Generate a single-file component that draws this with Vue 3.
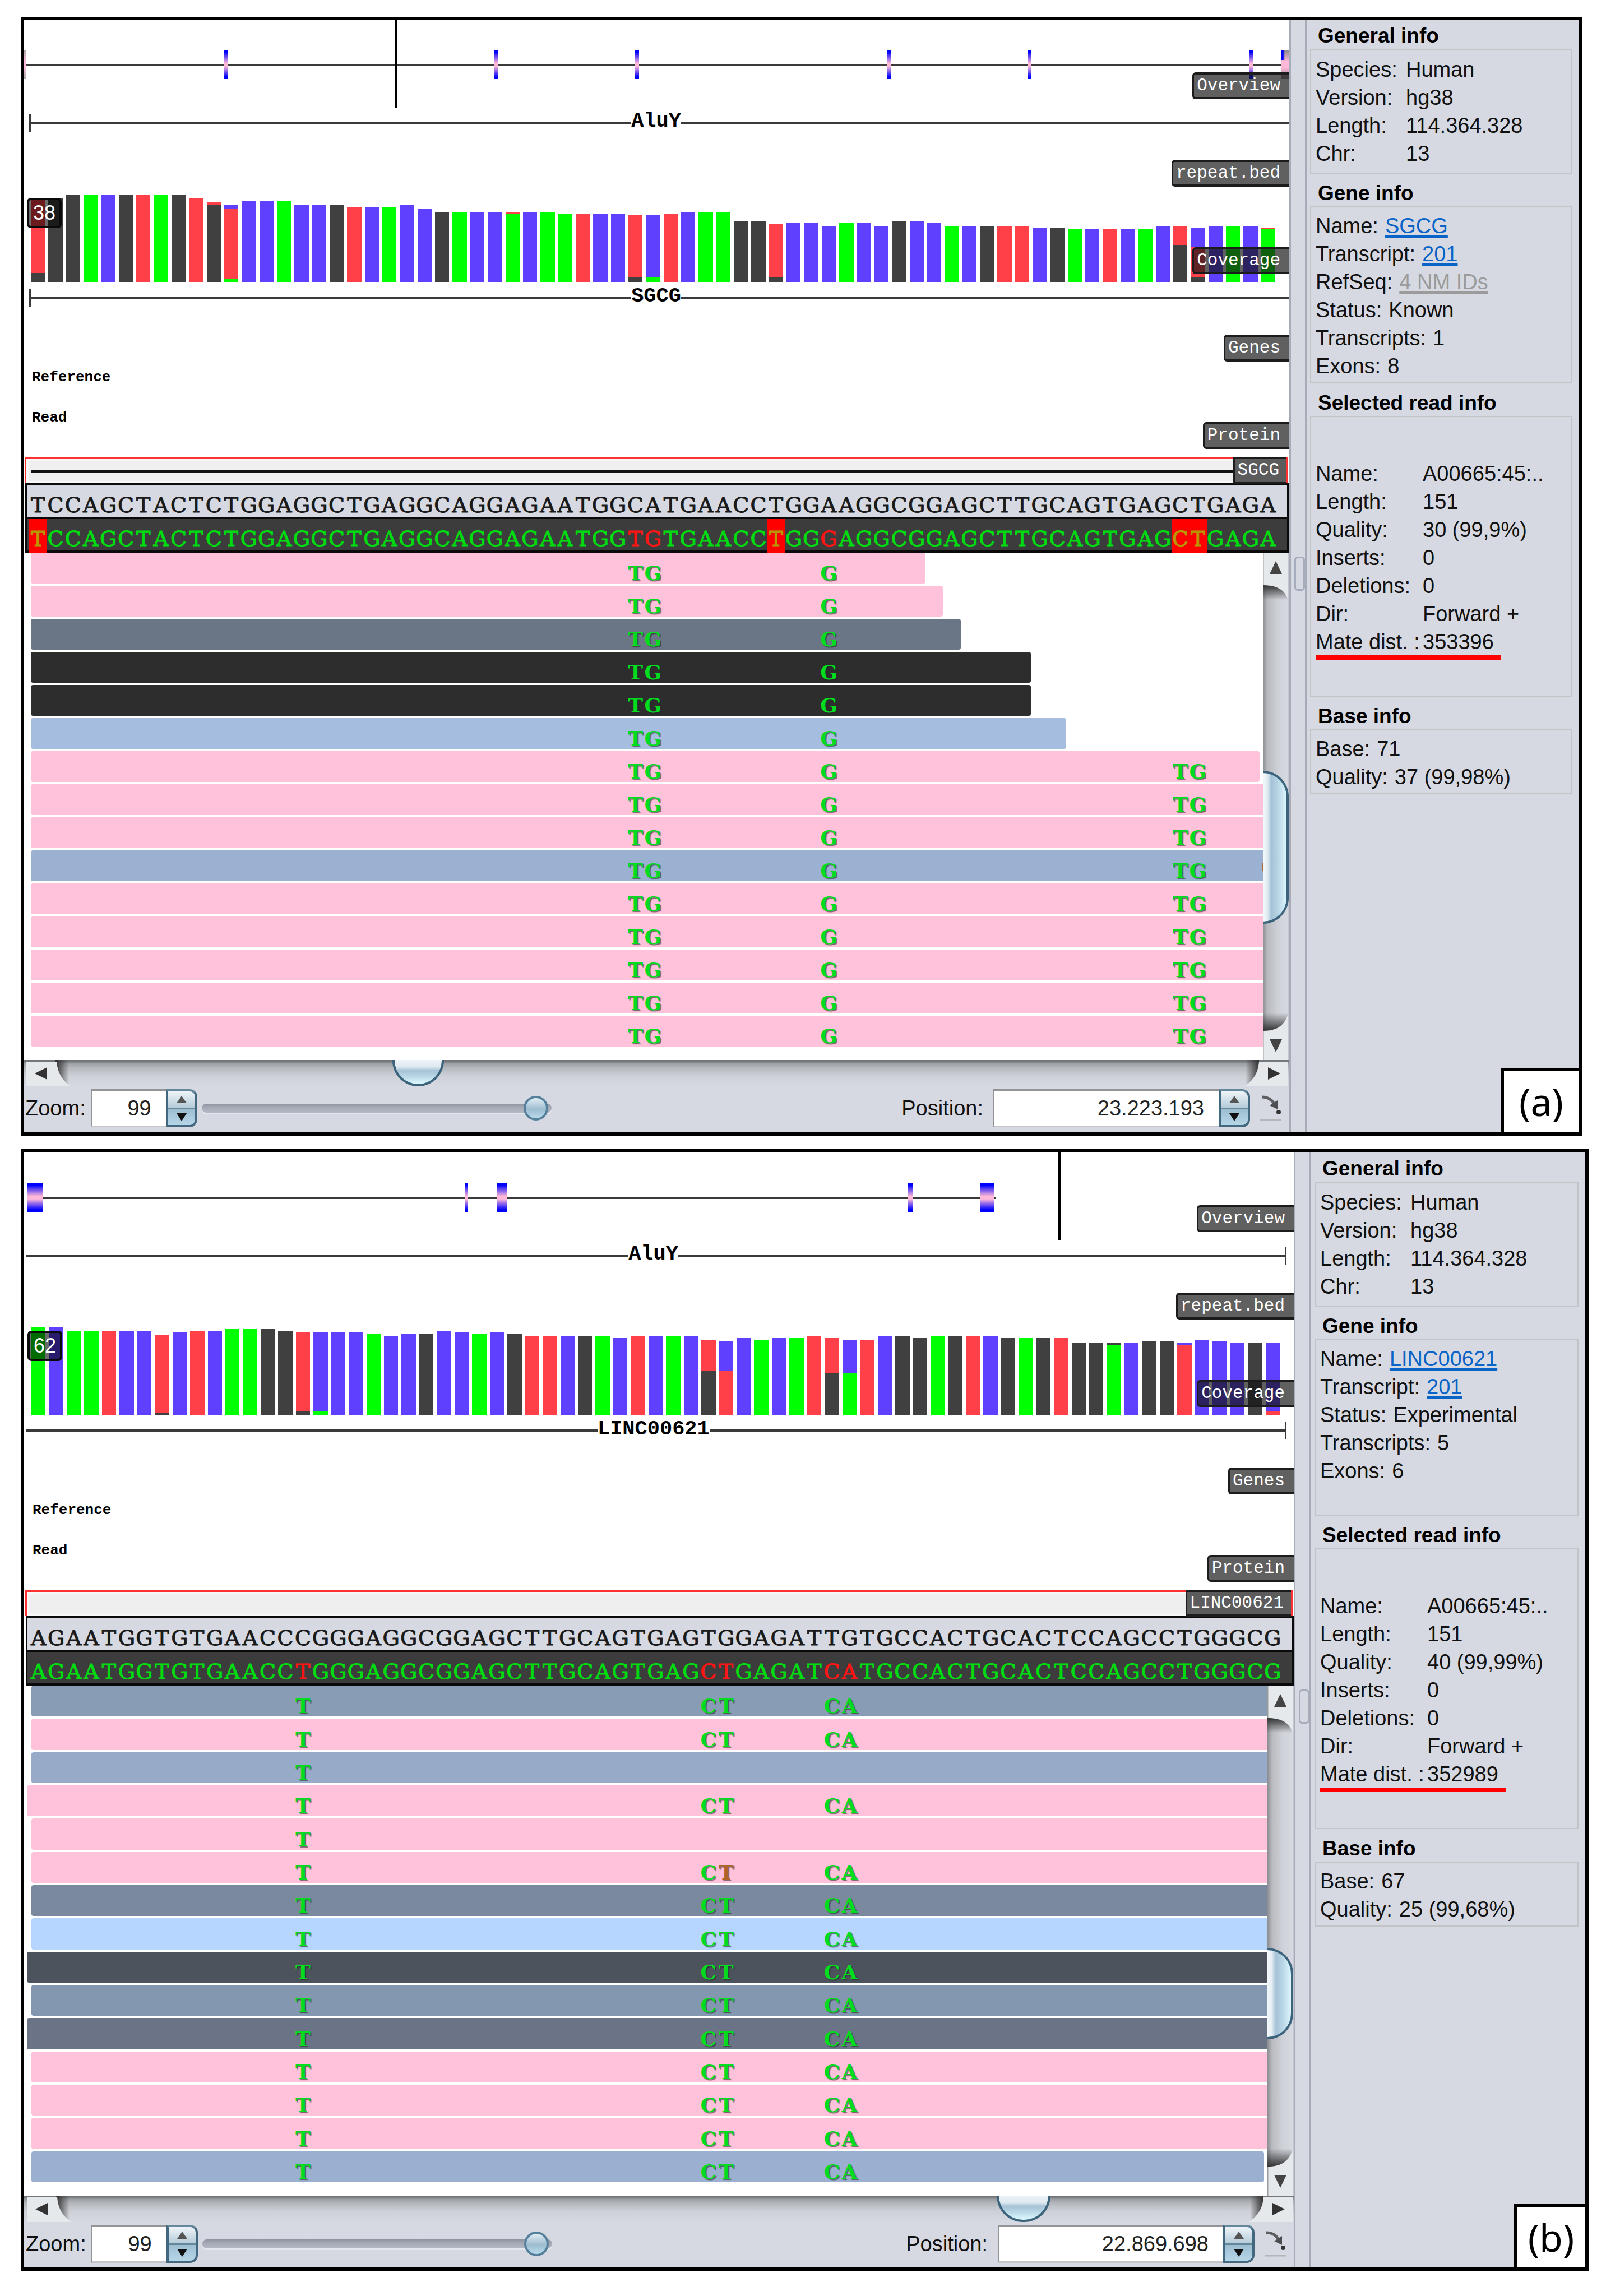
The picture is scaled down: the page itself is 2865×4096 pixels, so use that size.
<script setup>
// Depth is the number of reads over each base; the axis tops out at 50.
const AXIS = 50

// Turns a consensus, its depths and its mixed columns into stacked bars (top segment first).
function coverage(consensus, depths, mixed) {
  return consensus.split('').map((base, i) => mixed[i] || [[base, depths[i]]])
}

function bases(text, changed = [], marked = []) {
  return text.split('').map((base, i) => ({
    base,
    changed: changed.includes(i),
    marked: marked.includes(i)
  }))
}

const PINK = '#ffc2da'

const readA =
  'TCCAGCTACTCTGGAGGCTGAGGCAGGAGAATGGTGTGAACCTGGGAGGCGGAGCTTGCAGTGAGCTGAGA'
const depthA = [
  48, 48, 50, 50, 50, 50, 50, 50, 50, 48, 46, 44, 46, 46, 46, 44, 44, 44, 43, 43, 43, 44, 42, 40, 40,
  40, 40, 40, 40, 40, 39, 39, 39, 39, 38, 38, 39, 40, 40, 40, 35, 35, 33, 34, 34, 32, 34, 34, 32, 35,
  35, 34, 32, 32, 32, 32, 32, 31, 31, 30, 30, 30, 30, 30, 32, 32, 31, 32, 32, 32, 31
]
const readB =
  'AGAATGGTGTGAACCTGGGAGGCGGAGCTTGCAGTGAGCTGAGATCATGCCACTGCACTCCAGCCTGGGCG'
const depthB = [
  50, 50, 48, 48, 48, 48, 48, 46, 47, 48, 48, 49, 49, 49, 48, 47, 47, 47, 47, 46, 45, 46, 46, 48, 47,
  46, 47, 46, 45, 45, 45, 45, 45, 44, 45, 45, 45, 45, 43, 42, 44, 43, 44, 44, 45, 44, 43, 43, 45, 45,
  44, 45, 45, 45, 45, 44, 44, 44, 44, 41, 41, 41, 41, 42, 42, 41, 43, 42, 41, 41, 41
]

const short = [[34, 'T'], [35, 'G'], [45, 'G']]
const long = [...short, [65, 'T'], [66, 'G']]
const hap = [[15, 'T'], [38, 'C'], [39, 'T'], [45, 'C'], [46, 'A']]

const panels = [
  {
    id: 'a',
    tag: '(a)',
    gene: 'SGCG',
    max: '38',
    openEnd: 'right',
    cursor: 29.3,
    axis: [0.2, 0],
    exons: [
      { x: 0, w: 4 }, { x: 15.8, w: 7 }, { x: 37.2, w: 7 }, { x: 48.3, w: 7 },
      { x: 68.2, w: 7 }, { x: 79.3, w: 7 }, { x: 96.8, w: 7 }, { x: 99.4, w: 14 }
    ],
    bars: coverage(readA, depthA, {
      0: [['T', 43], ['C', 5]],
      10: [['T', 2], ['C', 44]],
      11: [['G', 2], ['T', 40], ['A', 2]],
      27: [['T', 1], ['A', 39]],
      34: [['T', 35], ['C', 3]],
      35: [['G', 35], ['A', 3]],
      42: [['T', 30], ['C', 3]],
      65: [['T', 11], ['C', 21]],
      66: [['G', 11], ['T', 17], ['C', 3]],
      70: [['T', 1], ['A', 30]]
    }),
    intron: true,
    reference: bases('TCCAGCTACTCTGGAGGCTGAGGCAGGAGAATGGCATGAACCTGGAAGGCGGAGCTTGCAGTGAGCTGAGA'),
    selected: bases(readA, [34, 35, 45], [0, 42, 65, 66]),
    reads: [
      { span: 51, color: PINK, alleles: short },
      { span: 52, color: PINK, alleles: short },
      { span: 53, color: '#6a7586', alleles: short },
      { span: 57, color: '#2d2d2d', alleles: short },
      { span: 57, color: '#2d2d2d', alleles: short },
      { span: 59, color: '#a5bddf', alleles: short },
      { span: 70, color: PINK, alleles: long },
      { span: 71, color: PINK, alleles: long },
      { span: 71, color: PINK, alleles: long },
      { span: 71, color: '#9ab1d1', alleles: long, edge: true },
      { span: 71, color: PINK, alleles: long },
      { span: 71, color: PINK, alleles: long },
      { span: 71, color: PINK, alleles: long },
      { span: 71, color: PINK, alleles: long },
      { span: 71, color: PINK, alleles: long }
    ],
    thumbV: { top: '43%', height: '30.2%' },
    thumbH: { left: '29.15%', width: '92px' },
    position: '23.223.193',
    geneInfo: [
      ['Name:', 'SGCG', 'link'],
      ['Transcript:', '201', 'link'],
      ['RefSeq:', '4 NM IDs', 'link link--off'],
      ['Status:', 'Known'],
      ['Transcripts:', '1'],
      ['Exons:', '8']
    ],
    quality: '30 (99,9%)',
    mate: '353396',
    baseInfo: [['Base:', '71'], ['Quality:', '37 (99,98%)']]
  },
  {
    id: 'b',
    tag: '(b)',
    gene: 'LINC00621',
    max: '62',
    openEnd: 'left',
    cursor: 81.4,
    axis: [0.2, 23.5],
    exons: [
      { x: 0.2, w: 28 }, { x: 34.7, w: 6 }, { x: 37.2, w: 19 }, { x: 69.6, w: 10 }, { x: 75.3, w: 24 }
    ],
    bars: coverage(readB, depthB, {
      7: [['T', 45], ['C', 1]],
      15: [['T', 45], ['C', 2]],
      16: [['G', 45], ['A', 2]],
      38: [['T', 18], ['C', 25]],
      39: [['G', 17], ['T', 25]],
      45: [['T', 20], ['C', 24]],
      46: [['G', 19], ['A', 24]],
      61: [['C', 1], ['A', 40]],
      65: [['G', 1], ['T', 40]],
      70: [['G', 39], ['T', 2]]
    }),
    intron: false,
    reference: bases('AGAATGGTGTGAACCCGGGAGGCGGAGCTTGCAGTGAGTGGAGATTGTGCCACTGCACTCCAGCCTGGGCG'),
    selected: bases(readB, [15, 38, 39, 45, 46]),
    reads: [
      { span: 71, color: '#899cb6', alleles: hap },
      { span: 71, color: PINK, alleles: hap },
      { span: 71, color: '#97abc9', alleles: [[15, 'T']] },
      { span: 71, color: PINK, alleles: hap, early: true },
      { span: 71, color: PINK, alleles: [[15, 'T']] },
      { span: 71, color: PINK, alleles: [[15, 'T'], [38, 'C'], [39, 'T', true], [45, 'C'], [46, 'A']] },
      { span: 71, color: '#7a899d', alleles: hap },
      { span: 71, color: '#b7d6ff', alleles: hap },
      { span: 71, color: '#4d535c', alleles: hap, early: true },
      { span: 71, color: '#8397b1', alleles: hap },
      { span: 71, color: '#6a7486', alleles: hap, early: true },
      { span: 71, color: PINK, alleles: hap },
      { span: 71, color: PINK, alleles: hap },
      { span: 71, color: PINK, alleles: hap },
      { span: 70, color: '#9bb0d0', alleles: hap }
    ],
    thumbV: { top: '51.4%', height: '17.9%' },
    thumbH: { left: '76.6%', width: '96px' },
    position: '22.869.698',
    geneInfo: [
      ['Name:', 'LINC00621', 'link'],
      ['Transcript:', '201', 'link'],
      ['Status:', 'Experimental'],
      ['Transcripts:', '5'],
      ['Exons:', '6']
    ],
    quality: '40 (99,99%)',
    mate: '352989',
    baseInfo: [['Base:', '67'], ['Quality:', '25 (99,68%)']]
  }
]

const generalInfo = [
  ['Species:', 'Human'],
  ['Version:', 'hg38'],
  ['Length:', '114.364.328'],
  ['Chr:', '13']
]

function readInfo(p) {
  return [
    ['Name:', 'A00665:45:..'],
    ['Length:', '151'],
    ['Quality:', p.quality],
    ['Inserts:', '0'],
    ['Deletions:', '0'],
    ['Dir:', 'Forward +'],
    ['Mate dist. :', p.mate]
  ]
}
</script>

<template>
  <main class="page">
    <article v-for="p in panels" :key="p.id" class="panel" :class="'panel--' + p.id">
      <section class="tracks">
        <div class="track">
          <span class="axis" :style="{ left: p.axis[0] + '%', right: p.axis[1] + '%' }"></span>
          <span
            v-for="(e, i) in p.exons"
            :key="i"
            class="exon"
            :style="{ left: e.x + '%', width: e.w + 'px' }"
          ></span>
          <span class="cursor" :style="{ left: p.cursor + '%' }"></span>
          <span class="label">Overview</span>
        </div>

        <div class="track">
          <div class="feature" :class="'feature--open-' + p.openEnd">
            <i class="stretch stretch--left"></i><b>AluY</b><i class="stretch stretch--right"></i>
          </div>
          <span class="label">repeat.bed</span>
        </div>

        <div class="track">
          <div class="bars">
            <div v-for="(bar, i) in p.bars" :key="i" class="bar">
              <i
                v-for="(seg, j) in bar"
                :key="j"
                :class="'base-' + seg[0]"
                :style="{ height: (seg[1] / AXIS) * 100 + '%' }"
              ></i>
            </div>
          </div>
          <span class="max">{{ p.max }}</span>
          <span class="label">Coverage</span>
        </div>

        <div class="track">
          <div class="feature" :class="'feature--open-' + p.openEnd">
            <i class="stretch stretch--left"></i><b>{{ p.gene }}</b><i class="stretch stretch--right"></i>
          </div>
          <span class="label">Genes</span>
        </div>

        <div class="track protein">
          <span>Reference</span>
          <span>Read</span>
          <span class="label">Protein</span>
        </div>

        <div class="model">
          <i v-if="p.intron"></i>
          <span class="label label--model">{{ p.gene }}</span>
        </div>
        <div class="sequence">
          <span v-for="(b, i) in p.reference" :key="i">{{ b.base }}</span>
        </div>
        <div class="sequence sequence--read">
          <span
            v-for="(b, i) in p.selected"
            :key="i"
            :class="{ changed: b.changed, marked: b.marked }"
          >{{ b.base }}</span>
        </div>

        <div class="alignment">
          <div class="viewport">
            <div class="reads">
              <div v-for="(r, i) in p.reads" :key="i" class="read">
                <i
                  class="body"
                  :class="{ 'body--early': r.early }"
                  :style="{ gridColumn: '1 / span ' + r.span, background: r.color }"
                ></i>
                <b
                  v-for="a in r.alleles"
                  :key="a[0]"
                  :class="{ odd: a[2] }"
                  :style="{ gridColumn: a[0] + 1 }"
                >{{ a[1] }}</b>
                <i v-if="r.edge" class="edge"></i>
              </div>
            </div>
          </div>
          <div class="vscroll">
            <button class="step" type="button" aria-label="Scroll up">
              <svg viewBox="0 0 45 84" width="45" height="84">
                <path d="M0 58h45v26H0z" fill="url(#shadeDown)" />
                <path d="M0 0H45V84C39 68 28 58 0 58Z" fill="#e6e9eb" />
                <path d="M0 0V58" stroke="#9a9c9e" stroke-width="3" />
                <path d="M23 15L34 38H12Z" fill="#444" />
              </svg>
            </button>
            <span class="vthumb" :style="p.thumbV"></span>
            <button class="step" type="button" aria-label="Scroll down">
              <svg viewBox="0 0 45 84" width="45" height="84">
                <path d="M0 0h45v32H0z" fill="url(#shadeUp)" />
                <path d="M0 84H45V2C39 20 28 32 0 32Z" fill="#e6e9eb" />
                <path d="M0 32V84" stroke="#9a9c9e" stroke-width="3" />
                <path d="M23 70L34 47H12Z" fill="#444" />
              </svg>
            </button>
          </div>
        </div>

        <div class="hscroll">
          <button class="step" type="button" aria-label="Scroll left">
            <svg viewBox="0 0 84 47" width="84" height="47">
              <path d="M52 0H76V47H52Z" fill="url(#shadeRight)" />
              <path d="M0 3H54C56 24 64 36 79 47H0Z" fill="#e6e9eb" />
              <path d="M15 24L37 13V35Z" fill="#333" />
            </svg>
          </button>
          <span class="hthumb" :style="p.thumbH"></span>
          <button class="step" type="button" aria-label="Scroll right">
            <svg viewBox="0 0 84 47" width="84" height="47">
              <path d="M8 0H32V47H8Z" fill="url(#shadeLeft)" />
              <path d="M84 3H32C30 24 22 36 6 47H84Z" fill="#e6e9eb" />
              <path d="M70 24L48 13V35Z" fill="#333" />
            </svg>
          </button>
        </div>

        <div class="controls">
          <label :for="'zoom-' + p.id">Zoom:</label>
          <div class="spinner spinner--zoom">
            <input :id="'zoom-' + p.id" type="text" value="99" />
            <div class="arrows">
              <button type="button" aria-label="Zoom in"><i class="up"></i></button>
              <button type="button" aria-label="Zoom out"><i class="down"></i></button>
            </div>
          </div>
          <input class="slider" type="range" min="1" max="100" value="99" aria-label="Zoom level" />
          <label class="position" :for="'position-' + p.id">Position:</label>
          <div class="spinner spinner--position">
            <input :id="'position-' + p.id" type="text" :value="p.position" />
            <div class="arrows">
              <button type="button" aria-label="Next position"><i class="up"></i></button>
              <button type="button" aria-label="Previous position"><i class="down"></i></button>
            </div>
          </div>
          <button class="jump" type="button" aria-label="Jump to position">
            <svg viewBox="0 0 44 48" width="44" height="48">
              <path d="M5 4C16 4 23 8 28 18" fill="none" stroke="#5d5f63" stroke-width="5" />
              <path d="M19 19L33 10L33 26Z" fill="#4c4e52" />
              <circle cx="35" cy="31" r="4" fill="#333" />
              <path d="M2 45H40" stroke="#b3b5bb" stroke-width="3" />
            </svg>
          </button>
        </div>
      </section>

      <div class="splitter" role="separator"></div>

      <aside class="sidebar">
        <h2>General info</h2>
        <dl class="box box--general">
          <div v-for="r in generalInfo" :key="r[0]"><dt>{{ r[0] }}</dt><dd>{{ r[1] }}</dd></div>
        </dl>
        <h2>Gene info</h2>
        <dl class="box box--gene">
          <div v-for="r in p.geneInfo" :key="r[0]">
            <dt>{{ r[0] }}</dt>
            <dd><a v-if="r[2]" href="#" :class="r[2]">{{ r[1] }}</a><template v-else>{{ r[1] }}</template></dd>
          </div>
        </dl>
        <h2>Selected read info</h2>
        <dl class="box box--read">
          <div v-for="r in readInfo(p)" :key="r[0]"><dt>{{ r[0] }}</dt><dd>{{ r[1] }}</dd></div>
        </dl>
        <h2>Base info</h2>
        <dl class="box">
          <div v-for="r in p.baseInfo" :key="r[0]"><dt>{{ r[0] }}</dt><dd>{{ r[1] }}</dd></div>
        </dl>
        <strong class="tag">{{ p.tag }}</strong>
      </aside>
    </article>

    <svg class="defs" width="0" height="0" aria-hidden="true">
      <linearGradient id="shadeRight"><stop offset="0" stop-color="#333" /><stop offset="1" stop-color="#333" stop-opacity="0" /></linearGradient>
      <linearGradient id="shadeLeft"><stop offset="0" stop-color="#333" stop-opacity="0" /><stop offset="1" stop-color="#333" /></linearGradient>
      <linearGradient id="shadeDown" x2="0" y2="1"><stop offset="0" stop-color="#333" /><stop offset="1" stop-color="#333" stop-opacity="0" /></linearGradient>
      <linearGradient id="shadeUp" x2="0" y2="1"><stop offset="0" stop-color="#333" stop-opacity="0" /><stop offset="1" stop-color="#333" /></linearGradient>
    </svg>
  </main>
</template>

<style>
body {
  margin: 0;
  background: #fff;
}
</style>

<style scoped>
* {
  box-sizing: border-box;
}
.page {
  display: flex;
  flex-direction: column;
  gap: 23px;
  min-height: 100vh;
  padding: 30px 31px 44px 38px;
  background: #fff;
  color: #111;
  font-family: "Liberation Sans", Arial, sans-serif;
  font-size: 38px;
}
.defs {
  position: absolute;
}
.panel {
  display: flex;
  flex: 2003 1 0;
  border: solid #000;
  border-width: 6px 6px 7px 5px;
  background: #d6d9e1;
}
.panel--a {
  flex-grow: 1996;
  margin-right: 12px;
  border-width: 5px 6px 8px 4px;
}
.tracks {
  display: flex;
  flex: 1;
  flex-direction: column;
  min-width: 0;
  background: #fff;
}
.track {
  position: relative;
  height: 156px;
}
.label {
  position: absolute;
  right: 0;
  bottom: 14px;
  padding: 0 16px 0 5px;
  border: solid #1c1c1c;
  border-width: 4px 0 4px 3px;
  border-radius: 6px 0 0 6px;
  background: rgba(20, 20, 20, 0.68);
  color: #fff;
  font: 31px/40px "Liberation Mono", "Courier New", monospace;
}
.axis {
  position: absolute;
  top: 79px;
  height: 4px;
  background: #3a3a3a;
}
.exon {
  position: absolute;
  top: 54px;
  height: 52px;
  background: linear-gradient(#0000ff 8%, #ffb8d8 46%, #ffb8d8 56%, #0000ff 92%);
}
.panel--a .exon:nth-of-type(2) {
  background: linear-gradient(#aaa, #ffb8d8 40%, #ffb8d8 60%, #aaa);
}
.panel--a .exon:nth-of-type(9) {
  background:
    linear-gradient(90deg, #0000ff 0 3px, transparent 6px) top / 100% 18px no-repeat,
    linear-gradient(#888, #ffb8d8 40%, #ffb8d8 60%, #888);
}
.cursor {
  position: absolute;
  top: 0;
  width: 5px;
  height: 157px;
  background: #000;
}
.feature {
  display: flex;
  align-items: center;
  height: 56px;
  padding-left: 10px;
}
.feature--open-left {
  padding: 0 13px 0 4px;
}
.feature b {
  padding-bottom: 6px;
  color: #000;
  font: bold 37px/40px "Liberation Mono", "Courier New", monospace;
}
.stretch {
  position: relative;
  height: 4px;
  background: #3a3a3a;
}
.stretch--left {
  flex: 99;
}
.stretch--right {
  flex: 100;
}
.feature--open-right .stretch--left::before,
.feature--open-left .stretch--right::before {
  content: "";
  position: absolute;
  top: -14px;
  left: 0;
  width: 3px;
  height: 32px;
  background: #3a3a3a;
}
.feature--open-left .stretch--right::before {
  right: 0;
  left: auto;
}
.bars {
  display: grid;
  grid-template-columns: repeat(71, minmax(0, 1fr));
  height: 100%;
  padding: 0 22px 0 10px;
}
.bar {
  display: flex;
  flex-direction: column;
  justify-content: flex-end;
  padding: 0 3px;
}
.base-A {
  background: #00ff00;
}
.base-C {
  background: #404040;
}
.base-G {
  background: #6040ff;
}
.base-T {
  background: #ff4048;
}
.max {
  position: absolute;
  top: 6px;
  left: 6px;
  padding: 0 7px;
  border: 4px solid #0a0a0a;
  border-radius: 7px;
  background: rgba(0, 0, 0, 0.58);
  color: #fff;
  font-size: 36px;
  line-height: 46px;
}
.protein {
  display: flex;
  flex-direction: column;
  gap: 44px;
  padding-left: 15px;
  color: #000;
  font: bold 26px/28px "Liberation Mono", "Courier New", monospace;
}
.model {
  position: relative;
  display: flex;
  align-items: center;
  height: 47px;
  margin: 0 2px;
  padding-left: 8px;
  border: solid #ff3030;
  border-width: 4px 3px 0;
  background: #efefef;
  box-shadow: inset 0 0 0 4px #f8f8f8;
}
.model i {
  flex: 1;
  height: 4px;
  background: #111;
}
.label--model {
  bottom: -1px;
  padding-right: 13px;
  border-radius: 0;
  background: #5c5c5c;
}
.sequence {
  display: grid;
  grid-template-columns: repeat(71, minmax(0, 1fr));
  height: 60px;
  margin-left: 3px;
  padding: 0 18px 0 4px;
  border: solid #0a0a0a;
  border-width: 4px 4px 0 3px;
  background: #d6d9e1;
  color: #1a1a1a;
  font: 38px/42px "DejaVu Serif", "Liberation Serif", serif;
  text-align: center;
  -webkit-text-stroke: 1px currentColor;
}
.sequence span {
  display: flex;
  align-items: flex-end;
  justify-content: center;
}
.sequence--read {
  height: 64px;
  border-bottom-width: 4px;
  background: #3c3c3c;
  color: #00dc10;
}
.sequence .changed {
  color: #ff1414;
}
.sequence .marked {
  background: #ff0000;
  box-shadow: 0 4px #ff0000;
  color: #b89a00;
}
.alignment {
  display: flex;
  flex: 1;
}
.viewport {
  flex: 1;
  min-width: 0;
  overflow: hidden;
  padding: 0 0 20px 10px;
}
.reads {
  display: grid;
  grid-auto-rows: minmax(59px, 1fr);
  width: calc(100% + 25px);
  height: 100%;
}
.read {
  display: grid;
  grid-template-columns: repeat(71, minmax(0, 1fr));
}
.body {
  grid-row: 1;
  margin: 0 0 4px 3px;
  border-radius: 4px;
}
.body--early {
  margin-left: -5px;
}
.read b {
  display: flex;
  align-items: flex-end;
  grid-row: 1;
  justify-content: center;
  color: #00dc1e;
  font: bold 36px/46px "DejaVu Serif", "Liberation Serif", serif;
  text-shadow: 2px 2px 1px rgba(40, 40, 40, 0.6);
}
.read .odd {
  color: #b06428;
}
.edge {
  grid-area: 1 / 71;
  align-self: center;
  width: 4px;
  height: 14px;
  margin-left: 4px;
  background: #b06428;
}
.vscroll {
  position: relative;
  display: flex;
  flex-direction: column;
  justify-content: space-between;
  width: 47px;
  border-right: 2px solid #c4c7cf;
  background: linear-gradient(90deg, #8b8d92, #b8bac0 18%, #cfd1d8 60%, #d6d9e1);
}
.step {
  display: block;
  padding: 0;
  border: 0;
  background: none;
}
.step svg {
  display: block;
}
.vthumb {
  position: absolute;
  left: 0;
  width: 46px;
  border: solid #3b637c;
  border-width: 4px 4px 4px 0;
  border-radius: 0 50px 50px 0;
  background: linear-gradient(90deg, #f4f8fa, #e4eef4 18%, #a5c2d6 36%, #b9d6e6 65%, #ddf6ff);
}
.hscroll {
  position: relative;
  display: flex;
  justify-content: space-between;
  height: 47px;
  padding: 0 2px 0 5px;
  background: linear-gradient(#74777c 6%, #9da0a5 14%, #b5b8bd 30%, #cdd0d7 60%, #d6d9e1);
}
.hthumb {
  position: absolute;
  top: 0;
  height: 47px;
  border: solid #3b637c;
  border-width: 0 4px 4px;
  border-radius: 0 0 48px 48px;
  background: linear-gradient(#eef3f7, #dfe9f0 28%, #a5c2d6 44%, #bcd9e8 70%, #defaff);
}
.controls {
  display: flex;
  align-items: center;
  height: 81px;
  padding: 0 10px 3px 3px;
  background: #d6d9e1;
}
.controls label {
  margin-right: 9px;
}
.controls .position {
  margin-right: 18px;
  margin-left: auto;
}
.spinner {
  display: flex;
  width: 190px;
  height: 68px;
}
.spinner--position {
  width: 458px;
}
.spinner input {
  flex: 1;
  min-width: 0;
  margin: 0;
  padding: 0 26px 0 0;
  border: solid #929496;
  border-width: 4px 0 3px 2px;
  border-bottom-color: #c3c5ca;
  border-radius: 0;
  background: #fff;
  color: #222;
  font: inherit;
  text-align: right;
}
.arrows {
  display: flex;
  flex-direction: column;
  width: 56px;
  overflow: hidden;
  border: 4px solid #41687f;
  border-top-color: #66889d;
  border-radius: 0 14px 14px 0;
}
.arrows button {
  display: flex;
  flex: 1;
  align-items: center;
  justify-content: center;
  padding: 0;
  border: 0;
  background: linear-gradient(#eef4f8, #b5cbd9);
}
.arrows button + button {
  border-top: 3px solid #66889d;
  background: linear-gradient(#9dbdd1, #b6d6e8);
}
.up,
.down {
  border: solid transparent;
  border-width: 0 9px 13px;
  border-bottom-color: #555;
}
.down {
  border-width: 14px 9px 0;
  border-top-color: #111;
}
.slider {
  width: 624px;
  height: 46px;
  margin: 0 0 0 8px;
  appearance: none;
  background: none;
}
.slider::-webkit-slider-runnable-track {
  height: 16px;
  border-radius: 8px;
  background: linear-gradient(#8e949f, #a4a9b5 40%, #b4b8c6);
  box-shadow: 0 3px #e3e6ec;
}
.slider::-webkit-slider-thumb {
  width: 44px;
  height: 44px;
  margin-top: -14px;
  appearance: none;
  border: 4px solid #54809c;
  border-radius: 50%;
  background: linear-gradient(#e2edf3, #9dbcd0 55%, #b8dbec);
}
.jump {
  display: flex;
  margin-left: 16px;
  padding: 0;
  border: 0;
  background: none;
}
.splitter {
  position: relative;
  width: 31px;
  border: solid #a8acb8;
  border-width: 0 3px;
  background: #d6d9e1;
}
.splitter::after {
  content: "";
  position: absolute;
  top: 958px;
  left: 6px;
  width: 13px;
  height: 55px;
  border: 3px solid #a5adbc;
  border-radius: 6px;
}
.sidebar {
  position: relative;
  width: 485px;
  padding: 6px 12px 0 6px;
}
.panel--b .sidebar {
  width: 489px;
}
.sidebar h2 {
  margin: 12px 0 0 14px;
  color: #000;
  font-size: 37px;
  line-height: 46px;
}
.sidebar h2:first-child {
  margin-top: 0;
}
.box {
  margin: 0;
  padding: 8px 0 4px 8px;
  border: 2px solid #c3c4c6;
}
.box div {
  position: relative;
  display: flex;
  gap: 12px;
  line-height: 50px;
  white-space: nowrap;
}
.box dd {
  margin: 0;
}
.box--general {
  padding: 10px 0 9px 8px;
}
.box--general div,
.box--read div {
  gap: 0;
}
.box--general dt {
  width: 161px;
}
.box--gene {
  min-height: 315px;
}
.box--read {
  padding: 76px 0 71px 8px;
}
.box--read dt {
  width: 191px;
}
.box--read div:last-child::after {
  content: "";
  position: absolute;
  top: 49px;
  left: 0;
  width: 331px;
  height: 8px;
  background: #ff0000;
}
.link {
  color: #0a64c8;
  text-decoration: underline;
  text-decoration-thickness: 4px;
  text-underline-offset: 4px;
}
.link--off {
  color: #9b9b9b;
}
.tag {
  position: absolute;
  right: 0;
  bottom: 0;
  display: flex;
  align-items: center;
  justify-content: center;
  width: 139px;
  height: 114px;
  border: solid #000;
  border-width: 6px 0 0 6px;
  background: #fff;
  color: #000;
  font: 68px/80px "Noto Sans", "Open Sans", sans-serif;
}
.panel--b .tag {
  width: 128px;
}
</style>
